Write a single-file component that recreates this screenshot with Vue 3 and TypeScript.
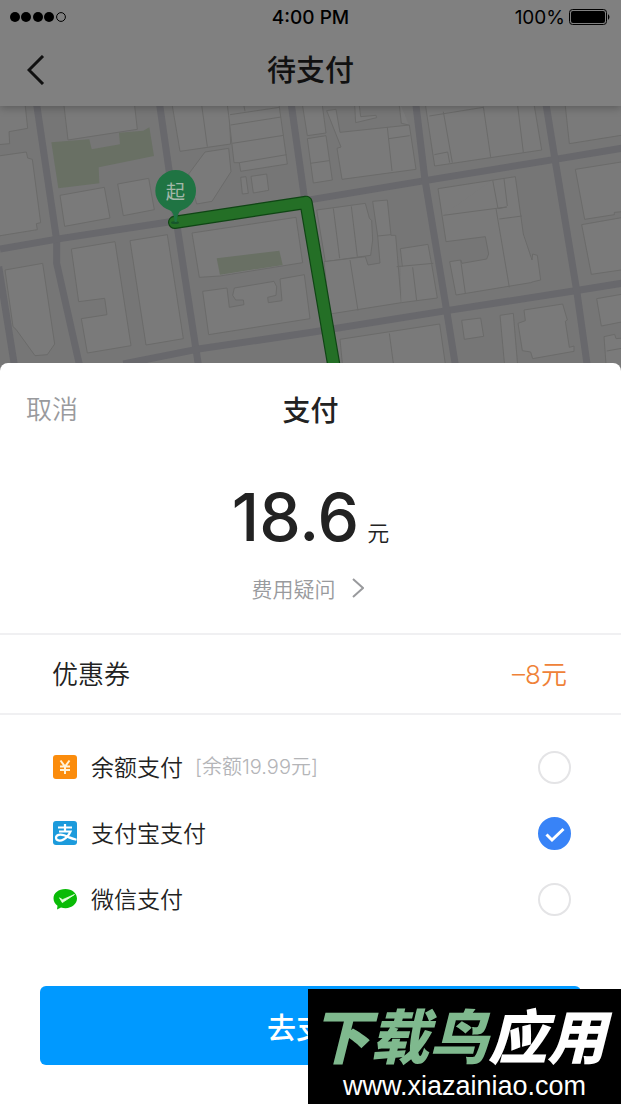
<script setup lang="ts">
import { ref } from 'vue'

type Method = 'balance' | 'alipay' | 'wechat'

interface PayOption {
  id: Method
  label: string
  note?: string
}

const options: PayOption[] = [
  { id: 'balance', label: '余额支付', note: '[余额19.99元]' },
  { id: 'alipay', label: '支付宝支付' },
  { id: 'wechat', label: '微信支付' },
]

const selected = ref<Method>('alipay')

const roads: string[] = [
  'M108 0 L170 420 L170 490 L244 820',
  'M477 0 L530 370 L599 820',
  'M872 0 L915 305',
  'M0 447 L180 416 L530 362',
  'M915 302 L1275 242 L1665 178 L1870 144',
  'M370 792 L590 748 L935 697 L1340 632 L1735 571 L1870 549',
  'M-4 500 L47 820',
  'M1246 0 L1275 240 L1340 632 L1370 820',
  'M1636 0 L1665 178 L1730 571 L1765 820',
]

const blocks: string[] = [
  'M-5 134 L29 131 L27 95 L83 85 L74 0 L-5 0Z',
  'M-5 168 L79 156 L83 174 L97 178 L122 368 L109 371 L112 389 L-5 408Z',
  'M190 0 L204 120 L412 88 L402 0Z',
  'M180 286 L313 262 L330 354 L194 379Z',
  'M353 252 L446 235 L463 329 L370 347Z',
  'M514 0 L540 154 L692 132 L686 0Z',
  'M603 0 L622 140',
  'M686 46 L680 0 L835 0 L862 192 L722 214 L718 188 L702 188Z',
  'M732 18 L735 34 M690 44 L838 22 M692 75 L843 51 M697 130 L851 106 M718 188 L860 164',
  'M615 156 L686 145 L693 215 L636 304 L590 312 L566 222Z',
  'M722 232 L738 230 L745 280 L727 282Z',
  'M753 229 L800 222 L806 271 L760 279Z',
  'M576 399 L888 352 L908 488 L660 528 L598 532Z',
  'M214 447 L345 425 L393 737 L262 759 L244 656 L321 644 L314 595 L236 605Z',
  'M390 422 L502 404 L550 716 L438 735Z',
  'M15 510 L128 490 L164 732 L142 764 L105 767 L48 688 L39 680Z',
  'M608 574 L681 564 L688 622 L732 614 L730 600 L707 600 L698 586 L703 564 L822 544 L830 560 L828 586 L803 592 L805 608 L846 602 L840 537 L913 524 L930 656 L626 704Z',
  'M905 0 L922 107 L978 99 L965 0Z M922 116 L978 107 L997 240 L940 249Z M931 190 L987 182',
  'M980 32 L1008 28 L1020 97 L1228 75 L1248 208 L1026 238 L1011 145 L1023 141Z',
  'M1162 82 L1176 213 M1166 116 L1229 107 M1227 75 L1204 70 L1196 0 M1063 0 L1067 68 L1130 53 L1128 46 L1082 50 L1076 0',
  'M1274 0 L1304 198 L1625 150 L1600 0Z',
  'M1288 48 L1450 22 M1330 35 L1357 188 M1450 20 L1472 171 M1551 0 L1570 157 M1303 164 L1343 156 L1349 188',
  'M1694 0 L1708 131 L1870 105 L1870 0Z',
  'M950 330 L1096 310 L1108 354 L1115 362 L1118 420 L1112 466 L976 485Z',
  'M1000 325 L1019 475 M1054 319 L1072 470',
  'M1118 304 L1162 300 L1173 406 L1187 406 L1204 608 L990 642 L972 485 L1096 470 L1104 495 L1140 489 L1133 408Z',
  'M1050 480 L1074 632 M1133 408 L1173 404 M1190 500 L1300 490 M1201 446 L1284 433 L1295 493 L1312 594 L1204 608 M1201 446 L1207 500 M1238 502 L1250 602',
  'M1314 266 L1546 230 L1570 402 L1596 480 L1598 462 L1612 466 L1622 540 L1600 545 L1592 548 L1368 585 L1349 485 L1382 480 L1386 490 L1460 477 L1466 462 L1456 410 L1338 425Z',
  'M1330 346 L1520 321 L1494 326 L1478 240 M1512 236 L1522 318 M1498 357 L1566 348 M1488 326 L1528 562 M1382 480 L1396 580',
  'M1726 208 L1870 185 L1870 335 L1843 337 L1843 344 L1754 358Z',
  'M1745 374 L1870 352 L1870 509 L1774 523Z',
  'M1385 661 L1442 654 L1451 709 L1393 718Z',
  'M1500 646 L1540 640 L1555 820 L1516 820Z',
  'M1572 630 L1688 612 L1702 660 L1696 664 L1708 742 L1722 738 L1722 754 L1598 776 L1592 756 L1567 752 L1554 670 L1576 662Z',
  'M1020 718 L1319 672 L1340 820 L1030 820Z M1168 700 L1184 820',
  'M1790 596 L1870 582 L1870 665 L1804 678Z',
  'M1812 710 L1844 703 L1848 716 L1870 714 L1870 820 L1820 820Z M1820 753 L1870 744',
]
</script>

<template>
  <main class="screen">
    <header class="top">
      <div class="status">
        <svg class="signal" viewBox="0 0 56 12" aria-hidden="true">
          <circle cx="5" cy="6" r="5" />
          <circle cx="16" cy="6" r="5" />
          <circle cx="28" cy="6" r="5" />
          <circle cx="39" cy="6" r="5" />
          <circle class="hollow" cx="51" cy="6" r="4.4" />
        </svg>
        <span class="time">4:00 PM</span>
        <span class="power">
          100%
          <svg class="battery" viewBox="0 0 42 16" aria-hidden="true">
            <rect class="case" x="0.5" y="0.5" width="37" height="15" rx="3" />
            <rect x="2" y="2" width="34" height="12" rx="2" />
            <path d="M39 5 Q42 8 39 11Z" />
          </svg>
        </span>
      </div>
      <nav class="nav">
        <button class="back" type="button" aria-label="返回">
          <svg viewBox="0 0 18 30" aria-hidden="true"><path d="M16 1 L2 15 L16 29" /></svg>
        </button>
        <h1>待支付</h1>
      </nav>
    </header>

    <div class="map">
      <svg viewBox="0 18 1863 795" preserveAspectRatio="xMidYMin slice" aria-hidden="true">
        <path v-for="(d, i) in blocks" :key="'b' + i" class="block" :d="d" />
        <path class="park" d="M154 127 L268 118 L275 148 L360 133 L357 98 L430 92 L448 82 L462 168 L296 202 L298 250 L175 265Z" />
        <path class="park" d="M650 475 L838 452 L848 495 L660 524Z" />
        <path v-for="(d, i) in roads" :key="'r' + i" class="road" :d="d" />
        <path class="route-edge" d="M524 367 L918 307 L1006 822" />
        <path class="route" d="M524 367 L918 307 L1006 822" />
        <ellipse class="foot" cx="525" cy="368" rx="12" ry="4" />
        <path class="pin" d="M527 210 A62 62 0 0 1 545 331 Q532 336 530 366 L524 366 Q522 336 509 331 A62 62 0 0 1 527 210Z" />
        <text class="pin-text" x="526" y="296" text-anchor="middle">起</text>
      </svg>
    </div>

    <section class="sheet">
      <div class="sheet-head">
        <button class="cancel" type="button">取消</button>
        <h2>支付</h2>
      </div>

      <p class="price"><strong>18.6</strong><span>元</span></p>
      <a class="question" href="#">
        费用疑问
        <svg viewBox="0 0 12 20" aria-hidden="true"><path d="M1 1 L11 10 L1 19" /></svg>
      </a>

      <div class="coupon">
        <span>优惠券</span>
        <span class="discount">–8元</span>
      </div>

      <div class="options">
        <label v-for="option in options" :key="option.id" class="option">
          <svg v-if="option.id === 'balance'" class="logo" viewBox="0 0 24 24" aria-hidden="true">
            <rect width="24" height="24" rx="3" fill="#fb8c0c" />
            <path d="M7.5 5.5 L12 11.500 L16.500 5.5 M12 11.500 V19 M7 11.500 H17 M7 15 H17" fill="none" stroke="#fff2d8" stroke-width="2" />
          </svg>
          <svg v-else-if="option.id === 'alipay'" class="logo" viewBox="0 0 24 24" aria-hidden="true">
            <rect width="24" height="24" rx="3" fill="#1c9bdc" />
            <path d="M5 6.500 H19 M12 3 V10.500 M6 10.500 H17.500 Q15 16 10.500 18.500 C7 20.500 3 19.500 3 16.700 C3 13.500 7.500 13 11 14.300 C15 15.800 18 17.500 23.500 18.700" fill="none" stroke="#fff" stroke-width="2.2" />
          </svg>
          <svg v-else class="logo" viewBox="0 0 24 24" aria-hidden="true">
            <path d="M12.500 2 C5.500 2 0.500 6 0.500 11.300 C0.500 14.500 2 17 4.500 18.800 L4 22.500 L8 20.600 C9.500 21 11 21.200 12.500 21.200 C19 21.200 24 16.900 24 11.600 C24 6.200 19 2 12.500 2Z" fill="#09bb07" />
            <path d="M6.500 10.800 L9.500 12.700 L21.500 7.500 L9.300 15.600Z" fill="#e6ffe0" stroke="#e6ffe0" stroke-width="0.800" stroke-linejoin="round" />
          </svg>
          <span class="name">{{ option.label }}</span>
          <span v-if="option.note" class="note">{{ option.note }}</span>
          <span class="choice">
            <input v-model="selected" type="radio" name="method" :value="option.id" />
            <svg v-if="selected === option.id" viewBox="0 0 33 33" aria-hidden="true"><path d="M8.500 17.500 L14 23 L25.500 12" /></svg>
          </span>
        </label>
      </div>

      <button class="pay" type="button">去支付</button>
    </section>

    <aside class="mark">
      <p class="mark-name"><span>下载鸟</span>应用</p>
      <p class="mark-url">www.xiazainiao.com</p>
    </aside>
  </main>
</template>

<style>
body {
  margin: 0;
}
</style>

<style scoped>
.screen {
  position: relative;
  display: flex;
  flex-direction: column;
  min-height: 100vh;
  overflow: hidden;
  background: #767676;
  color: #222;
  font-family: Inter, "Noto Sans CJK SC", sans-serif;
}

h1,
h2,
p {
  margin: 0;
  font-weight: 500;
}

button {
  border: 0;
  padding: 0;
  background: none;
  font-family: inherit;
  cursor: pointer;
}

.top {
  position: relative;
  z-index: 1;
  background: #808080;
  box-shadow: 0 2px 8px rgba(0, 0, 0, 0.25);
}

.status {
  display: grid;
  grid-template-columns: 1fr auto 1fr;
  align-items: center;
  height: 34px;
  padding: 0 10px;
  color: #000;
  font-size: 19px;
}

.signal {
  width: 56px;
  height: 12px;
}

.hollow {
  fill: none;
  stroke: #000;
}

.time {
  font-weight: 500;
}

.power {
  display: flex;
  justify-content: flex-end;
  align-items: center;
  gap: 4px;
}

.battery {
  width: 42px;
  height: 16px;
}

.case {
  fill: none;
  stroke: #000;
}

.nav {
  display: grid;
  grid-template-columns: 1fr auto 1fr;
  align-items: center;
  height: 72px;
  padding: 0 27px;
}

.nav h1 {
  padding-top: 2px;
  color: #111;
  font-size: 29px;
  line-height: 40px;
}

.back {
  width: 18px;
  height: 30px;
}

.back svg {
  display: block;
  width: 18px;
  height: 30px;
  fill: none;
  stroke: #111;
  stroke-width: 3;
}

.map {
  position: relative;
  flex: 1 1 200px;
  min-height: 200px;
  margin-bottom: -8px;
}

.map svg {
  position: absolute;
  inset: 0;
  width: 100%;
  height: 100%;
}

.block {
  fill: #7a7a7a;
  stroke: #6b6b6a;
  stroke-width: 3;
}

.park {
  fill: #697064;
}

.road {
  fill: none;
  stroke: #68686c;
  stroke-width: 21;
  stroke-linejoin: round;
}

.route-edge,
.route {
  fill: none;
  stroke-linecap: round;
  stroke-linejoin: round;
}

.route-edge {
  stroke: #0f4514;
  stroke-width: 40;
}

.route {
  stroke: #246f26;
  stroke-width: 33;
}

.foot {
  fill: #17552b;
}

.pin {
  fill: #1f7443;
}

.pin-text {
  fill: #a3b8aa;
  font-size: 58px;
}

.sheet {
  position: relative;
  z-index: 1;
  border-radius: 8px 8px 0 0;
  background: #fff;
}

.sheet-head {
  display: grid;
  grid-template-columns: 1fr auto 1fr;
  align-items: center;
  height: 94px;
  padding: 0 26px;
}

.cancel {
  justify-self: start;
  color: #999a9d;
  font-size: 26px;
  font-weight: 350;
  line-height: 40px;
}

.sheet-head h2 {
  padding-top: 2px;
  font-size: 28px;
  line-height: 40px;
}

.price {
  display: flex;
  justify-content: center;
  align-items: baseline;
  gap: 8px;
  padding-top: 20px;
  line-height: 80px;
}

.price strong {
  font-size: 66px;
  font-weight: 500;
}

.price span {
  font-size: 22px;
  font-weight: 350;
}

.question {
  display: flex;
  justify-content: center;
  align-items: center;
  gap: 16px;
  height: 30px;
  padding: 0 6px 30px 0;
  color: #999a9d;
  font-size: 21px;
  font-weight: 350;
  text-decoration: none;
}

.question svg {
  width: 12px;
  height: 20px;
  fill: none;
  stroke: #999a9d;
  stroke-width: 2;
}

.coupon {
  display: flex;
  justify-content: space-between;
  align-items: center;
  height: 74px;
  padding: 0 54px 4px 52px;
  border: solid #f0f0f2;
  border-width: 2px 0;
  font-size: 26px;
  font-weight: 350;
}

.discount {
  color: #ef8238;
}

.options {
  padding: 19px 50px 54px 53px;
}

.option {
  display: flex;
  align-items: center;
  height: 66px;
  cursor: pointer;
}

.logo {
  width: 24px;
  height: 24px;
}

.name {
  padding-bottom: 2px;
  margin-left: 14px;
  font-size: 23px;
  font-weight: 350;
}

.note {
  padding-bottom: 4px;
  margin-left: 12px;
  color: #b4b5b8;
  font-size: 20px;
  font-weight: 350;
}

.choice {
  display: grid;
  width: 33px;
  height: 33px;
  margin-left: auto;
}

.choice > * {
  grid-area: 1 / 1;
}

.choice input {
  box-sizing: border-box;
  width: 33px;
  height: 33px;
  margin: 0;
  border: 2px solid #e4e4e6;
  border-radius: 50%;
  appearance: none;
  background: #fff;
}

.choice input:checked {
  border-color: #3883f7;
  background: #3883f7;
}

.choice svg {
  width: 33px;
  height: 33px;
  fill: none;
  stroke: #fff;
  stroke-width: 3;
  pointer-events: none;
}

.pay {
  display: block;
  width: calc(100% - 80px);
  height: 79px;
  margin: 0 40px 39px;
  border-radius: 6px;
  background: #0099ff;
  color: #fff;
  font-size: 29px;
  font-weight: 500;
}

.mark {
  position: absolute;
  z-index: 2;
  right: 0;
  bottom: 0;
  box-sizing: border-box;
  width: 313px;
  height: 115px;
  padding-top: 17px;
  background: #000;
  color: #fff;
  text-align: center;
}

.mark-name {
  padding-right: 12px;
  font-size: 59px;
  font-style: italic;
  font-weight: 900;
  line-height: 64px;
}

.mark-name span {
  color: #7fb98e;
}

.mark-url {
  font-family: "Liberation Sans", Arial, sans-serif;
  font-size: 27px;
  font-weight: 400;
  line-height: 32px;
}
</style>
